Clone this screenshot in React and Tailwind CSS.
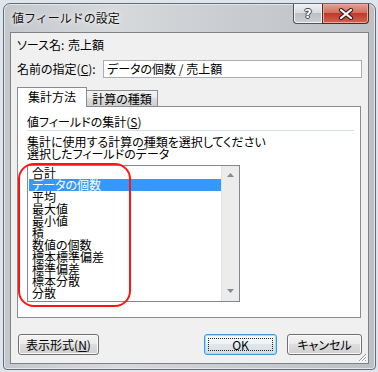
export default function App() {
  const items = ["合計", "データの個数", "平均", "最大値", "最小値", "積", "数値の個数", "標本標準偏差", "標準偏差", "標本分散", "分散"];
  const btn = "h-[21px] flex items-center justify-center rounded-[3px] border border-[#707070] bg-[linear-gradient(180deg,#f3f3f3_0%,#ebebeb_45%,#dddddd_50%,#cfcfcf_100%)] shadow-[inset_0_0_0_1px_#fbfbfb] text-[12px] leading-[12px]";
  return (
    <div className="relative w-[378px] h-[372px] overflow-hidden bg-[#dfe5ec] pl-[3px] pt-[3px] font-['Noto_Sans_CJK_JP','Noto_Sans',sans-serif] text-[12px] leading-[12px] text-black [font-feature-settings:'palt']">
      <div className="flex flex-col w-[373px] h-[367px] rounded-t-[7px] rounded-b-[4px] border border-[#666b71] bg-[linear-gradient(90deg,#c3c7cc_0%,#d7d9dc_30%,#cbced2_55%,#bcc0c5_100%)] shadow-[inset_0_0_0_1px_#e4e6e9] px-[6px] pb-[5px]">
        {/* title bar */}
        <div className="flex h-[28px] shrink-0">
          <div className="pl-[2px] pt-[8px] text-[12px] leading-[12px] text-[#111] [font-feature-settings:normal] [text-shadow:0_0_6px_#f4f4f4,0_0_3px_#ffffff]">値フィールドの設定</div>
          <div className="ml-auto flex h-[20px]">
            <div className="w-[29px] h-[20px] flex items-center justify-center rounded-bl-[4px] border border-[#4f545a] border-t-0 border-r-0 bg-[linear-gradient(180deg,#eef0f2_0%,#dadde0_45%,#bcc0c5_50%,#cdd1d5_100%)] shadow-[inset_0_0_0_1px_#f0f2f4]">
              <span className="font-['DejaVu_Sans',sans-serif] text-[13px] leading-[13px] font-bold text-white [text-shadow:1px_0_#3d4247,-1px_0_#3d4247,0_1px_#3d4247,0_-1px_#3d4247]">?</span>
            </div>
            <div className="w-[47px] h-[20px] flex items-center justify-center rounded-br-[4px] border border-[#4a2a26] border-t-0 bg-[linear-gradient(180deg,#e4a193_0%,#d3705f_45%,#c2392a_50%,#d06452_100%)] shadow-[inset_0_0_0_1px_#e8a89c]">
              <svg width="16" height="12" viewBox="0 0 16 12">
                <path d="M3 2 L13 10 M13 2 L3 10" stroke="#3b2020" strokeWidth="4.2" strokeLinecap="round" />
                <path d="M3 2 L13 10 M13 2 L3 10" stroke="#ffffff" strokeWidth="2.2" strokeLinecap="round" />
              </svg>
            </div>
          </div>
        </div>
        {/* client */}
        <div className="relative flex-1 flex flex-col border border-[#7d8287] bg-[#f0f0f0] px-[6px]">
          <div className="mt-[6px] h-[12px] flex">
            <span className="w-[51px]">ソース名:</span>
            <span>売上額</span>
          </div>
          <div className="mt-[9px] h-[18px] flex items-center">
            <span className="w-[86px]">名前の指定(<span className="underline">C</span>):</span>
            <div className="flex-1 h-[18px] border border-[#abadb3] bg-white pl-[3px] flex items-center">データの個数 / 売上額</div>
          </div>
          {/* tabs */}
          <div className="mt-[9px] flex items-end">
            <div className="relative z-10 w-[70px] h-[20px] mb-[-1px] border border-b-0 border-[#898c95] bg-white flex items-center justify-center pb-[2px]">集計方法</div>
            <div className="w-[71px] h-[16px] border-t border-r border-[#898c95] bg-[linear-gradient(180deg,#f2f2f2_0%,#ebebeb_45%,#dddddd_50%,#cfcfcf_100%)] flex items-center justify-center">計算の種類</div>
          </div>
          {/* panel */}
          <div className="w-[344px] h-[212px] border border-[#898c95] bg-white flex flex-col">
            <div className="mt-[9px] ml-[9px] h-[12px]">値フィールドの集計(<span className="underline">S</span>)</div>
            <div className="mt-[2px] ml-[9px] mr-[6px] h-px bg-[#d5dde5]"></div>
            <div className="mt-[5px] ml-[9px] h-[12px]">集計に使用する計算の種類を選択してください</div>
            <div className="ml-[9px] h-[12px]">選択したフィールドのデータ</div>
            <div className="mt-[5px] ml-[9px] w-[213px] h-[137px] border border-[#828790] flex">
              <div className="flex-1 pt-[1px] pl-[1px] flex flex-col">
                {items.map((it, i) => (
                  <div key={it} className={"h-[12px] leading-[12px] pl-[3px] " + (i === 1 ? "bg-[#3399ff] text-white" : "")}>{it}</div>
                ))}
              </div>
              <div className="w-[18px] bg-[#ececec] border-l border-[#e2e2e2] flex flex-col items-center justify-between pt-[7px] pb-[8px]">
                <svg width="7" height="4" viewBox="0 0 7 4"><path d="M0 4 L3.5 0 L7 4 Z" fill="#8a8a8a" /></svg>
                <svg width="7" height="4" viewBox="0 0 7 4"><path d="M0 0 L7 0 L3.5 4 Z" fill="#8a8a8a" /></svg>
              </div>
            </div>
          </div>
          {/* buttons */}
          <div className="mt-[16px] flex">
            <div className={btn + " ml-[1px] w-[81px]"}>表示形式(<span className="underline">N</span>)</div>
            <div className="ml-auto flex gap-[10px]">
              <div className="w-[73px] h-[21px] rounded-[3px] border border-[#3c9ad6] bg-[linear-gradient(180deg,#f6f9fb_0%,#eef2f5_45%,#e0e6ea_50%,#d6dde2_100%)] shadow-[inset_0_0_0_1px_#9fdcf8] p-[3px]">
                <div className="w-full h-full border border-dotted border-[#222] flex items-center justify-center text-[12px] leading-[12px]">OK</div>
              </div>
              <div className={btn + " w-[75px]"}>キャンセル</div>
            </div>
          </div>
          {/* resize grip */}
          <svg className="absolute right-[1px] bottom-[1px]" width="10" height="10" viewBox="0 0 10 10">
            <path d="M9 2 L2 9 M9 5 L5 9 M9 8 L8 9" stroke="#9a9ea3" strokeWidth="1" />
            <path d="M10 3 L3 10 M10 6 L6 10" stroke="#ffffff" strokeWidth="1" />
          </svg>
        </div>
      </div>
      {/* red annotation */}
      <div className="absolute left-[18px] top-[163px] w-[113px] h-[144px] rounded-[16px] border-2 border-[#ff1414]"></div>
    </div>
  );
}
